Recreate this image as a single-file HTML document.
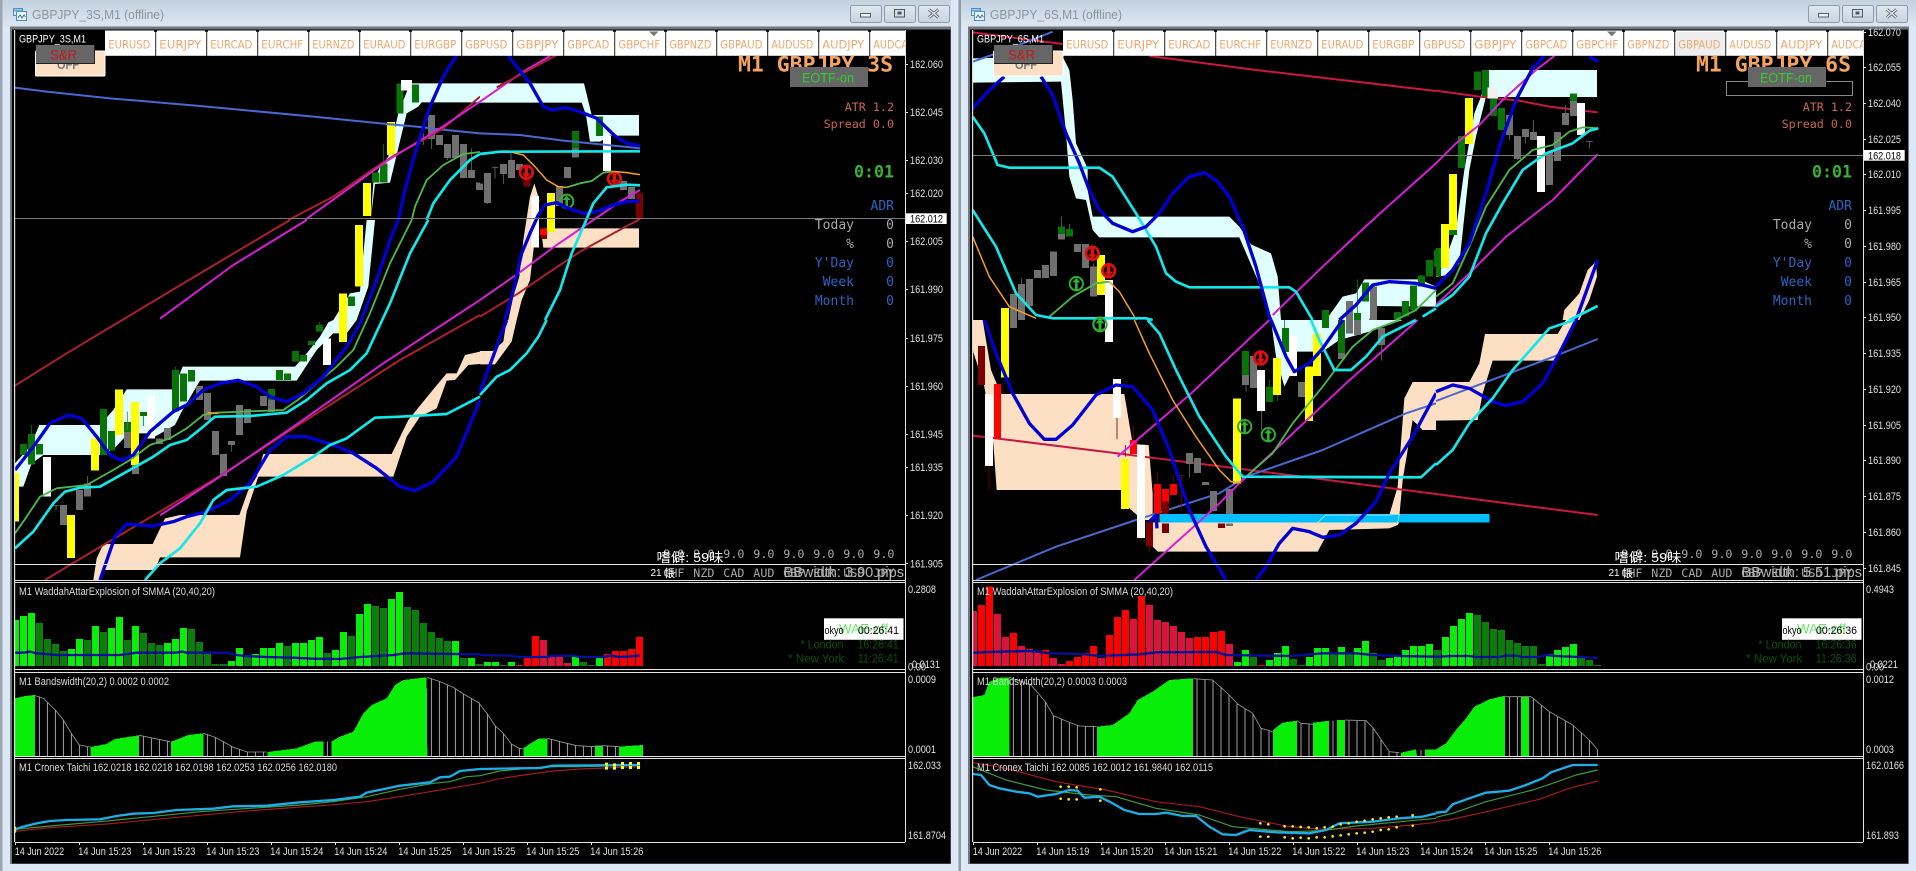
<!DOCTYPE html>
<html><head><meta charset="utf-8"><title>GBPJPY charts</title>
<style>
html,body{margin:0;padding:0;background:#dce8f5;width:1916px;height:871px;overflow:hidden}
svg{display:block}
.n{fill:none;stroke-linejoin:round;stroke-linecap:round}
.b{fill:none;stroke:#0000d2;stroke-width:10;stroke-linejoin:round}
.c{fill:none;stroke:#12e8ea;stroke-width:8;stroke-linejoin:round}
.g{fill:none;stroke:#4cb84c;stroke-width:5.5;stroke-linejoin:round}
.o{fill:none;stroke:#f0a020;stroke-width:4.5;stroke-linejoin:round}
.m{fill:none;stroke:#d41fd4;stroke-width:6;stroke-linejoin:round}
.r{fill:none;stroke:#aa2030;stroke-width:6;stroke-linejoin:round}
.q{fill:none;stroke:#c81840;stroke-width:6;stroke-linejoin:round}
.k{fill:none;stroke:#4a68d0;stroke-width:6;stroke-linejoin:round}
.nv{fill:none;stroke:#00109a;stroke-width:7;stroke-linejoin:round}
.cb{fill:none;stroke:#1eaee6;stroke-width:7;stroke-linejoin:round}
.gt{fill:none;stroke:#3f9a3f;stroke-width:3.5;stroke-linejoin:round}
.rt{fill:none;stroke:#a01c1c;stroke-width:3.5;stroke-linejoin:round}
.cv{fill:none;stroke:#9a9a9a;stroke-width:2.5;stroke-linejoin:round}
.vl{fill:none;stroke:#c4c4c4;stroke-width:2.5}
.wk{fill:none;stroke:#6a6a6a;stroke-width:2.5}
.wg{fill:none;stroke:#0a7a0a;stroke-width:2.5}
.wr{fill:none;stroke:#7a0000;stroke-width:2.5}
.cyan{fill:#e0ffff}.pe{fill:#fddfc3}
.ye{fill:#ff0}.wh{fill:#fff}.gr{fill:#707070}.dg{fill:#087408}.rd{fill:#f00}.dr{fill:#7b0000}
text{font-family:"Liberation Sans",sans-serif;font-size:11px;fill:#ddd}
.ax{fill:#e0e0e0}
.tb{font-family:"DejaVu Sans",sans-serif;font-size:11.5px;fill:#f0a870}
.mono{font-family:"DejaVu Sans Mono","Liberation Mono",monospace}
.tt{font-size:12.5px;fill:#8b949c}
</style></head>
<body>
<svg xmlns="http://www.w3.org/2000/svg" width="1916" height="871" viewBox="0 0 1916 871">
<defs>
<g id="dn"><circle r="23" fill="#e01010"/><circle r="15" fill="#000"/><path d="M-5 -23H5V3H13L0 17L-13 3H-5Z" fill="#e01010"/></g>
<g id="up"><circle r="20" fill="none" stroke="#2fae2f" stroke-width="6"/><path d="M-4 20H4V-4H12L0 -17L-12 -4H-4Z" fill="#2fae2f"/></g>
<linearGradient id="tbg" x1="0" y1="0" x2="0" y2="1"><stop offset="0" stop-color="#c3d1df"/><stop offset="1" stop-color="#dde7f1"/></linearGradient>
<linearGradient id="btn" x1="0" y1="0" x2="0" y2="1"><stop offset="0" stop-color="#dfe8f1"/><stop offset="1" stop-color="#c6d3e0"/></linearGradient>
</defs>

<!-- page frame -->
<rect width="1916" height="871" fill="#dce8f5"/>
<rect x="0" y="0" width="1916" height="27" fill="url(#tbg)"/>
<rect x="0" y="0" width="2.5" height="871" fill="#9ba6b1"/>
<rect x="951" y="0" width="9" height="871" fill="#dce8f5"/>
<rect x="958.5" y="0" width="2.5" height="871" fill="#8e99a4"/>
<rect x="10" y="26.5" width="941" height="837.5" fill="#6f7780"/>
<rect x="968" y="26.5" width="941" height="837.5" fill="#6f7780"/>
<rect x="12" y="29.5" width="938.5" height="834" fill="#000"/>
<rect x="970" y="29.5" width="938" height="834" fill="#000"/>

<!-- WINDOW 1 main -->
<g transform="translate(0,0) scale(.33333)">
<polygon class="cyan" points="1112,660 1125,552 1170,548 1220,340 1255,320 1265,307 1440,307 1440,250 1230,250 1195,340 1165,470 1140,500 1120,550"/>
<g shape-rendering="crispEdges">
<path class="dg" d="M1189 250h22v90h-22zM1236 253h21v54h-21zM1140 490h22v58h-22zM1116 518h22v30h-22z"/>
<path class="wh" d="M1203 240h33v32h-33z"/>
<path class="ye" d="M1161 366h24v99h-24zM1089 549h24v99h-24z"/>
<path class="gr" d="M1284 345h21v72h-21zM1308 405h21v30h-21zM1332 432h21v42h-21zM1356 405h21v69h-21zM1380 432h21v102h-21zM1404 510h21v24h-21zM1428 548h12v22h-12z"/>
</g>
<path class="wg" d="M1150 432V490"/><path class="wk" d="M1294 417V447M1270 400V435M1342 474V480M1414 445V510"/>
<polyline class="k" points="45,263 140,275 330,295 600,318 760,333 940,350 1160,372 1250,380 1320,388 1440,400"/>
<polyline class="r" points="865,660 1000,590 1145,490 1190,462 1260,425 1330,385 1440,290"/>
<polyline class="m" points="915,660 1165,480 1320,385 1440,305"/>
<polyline class="b" points="1195,660 1215,570 1245,460 1290,320 1330,230 1380,150"/>
<polyline class="g" points="1235,660 1245,620 1280,540 1330,495 1390,462 1440,456"/>
<polyline class="c" points="1280,660 1300,610 1350,540 1410,480 1440,462"/>
</g>
<g transform="translate(480,0) scale(.33333)">
<polygon class="cyan" points="0,250 312,250 335,345 477,345 477,407 390,407 360,425 330,425 318,345 305,308 0,308"/>
<polygon class="pe" points="163,550 150,590 130,720 118,830 100,890 85,960 110,960 125,900 150,840 178,600"/>
<polygon class="pe" points="190,685 477,685 477,743 190,743 185,705"/>
<g shape-rendering="crispEdges">
<path class="wh" d="M155 588h22v155h-22zM369 408h24v105h-24z"/>
<path class="ye" d="M201 579h24v117h-24z"/>
<path class="dg" d="M348 349h21v59h-21zM276 393h21v52h-21z"/>
<path class="gr" d="M276 445h21v28h-21zM0 550h9v20h-9zM12 519h21v90h-21zM60 492h21v30h-21zM84 480h21v54h-21zM108 492h21v18h-21zM252 501h21v33h-21zM228 558h21v60h-21zM420 543h21v27h-21zM444 561h21v36h-21z"/>
<path class="dr" d="M468 579h21v78h-21zM183 705h18v12h-18zM130 530h22v30h-22z"/>
<path class="rd" d="M180 685h21v20h-21z"/>
</g>
<path class="wk" d="M45 500V535M36 502H55M70 522V552M93 458V480M22 609V612"/>
<use href="#dn" x="139" y="517"/><use href="#dn" x="403" y="536"/><use href="#up" x="260" y="604"/>
<polyline class="m" points="0,305 130,215 210,168"/><polyline class="r" points="50,262 230,165"/>
<polyline class="k" points="0,400 120,405 250,422 480,445"/>
<polyline class="b" points="85,168 150,250 190,320 215,330 260,323 300,335 350,355 405,408 440,430 480,437"/>
<polyline class="c" points="0,462 60,455 480,454"/>
<polyline class="o" points="100,458 130,465 165,500 200,540 235,560 260,562"/>
<polyline class="g" points="260,562 300,550 335,543 370,518 400,514"/>
<polyline class="o" points="400,514 440,518 480,524"/>
<polyline class="m" points="0,900 115,820 230,735 340,660 420,605 480,570"/>
<polyline class="r" points="0,950 115,880 210,815 300,755 400,700 480,657"/>
<polyline class="b" points="75,960 100,870 125,760 150,700 175,645 195,615 230,608 265,625 310,640 350,635 400,615 440,605 480,603"/>
<polyline class="c" points="195,960 240,870 275,760 310,680 340,610 380,562 440,554 480,556"/>
</g>
<g transform="translate(0,220) scale(.33333)">
<polygon class="cyan" points="45,800 70,800 95,730 130,705 310,705 345,683 385,640 440,640 465,650 525,615 545,575 600,482 890,482 950,390 1000,340 1040,340 1070,300 1105,200 1125,0 1100,0 1090,100 1080,215 1050,220 1000,300 985,307 960,350 920,400 885,440 548,440 520,508 380,508 340,570 300,615 118,615 90,680 45,730"/>
<polygon class="pe" points="280,1080 290,1015 310,972 458,972 495,895 540,885 718,885 745,810 770,770 790,702 1175,702 1225,600 1290,520 1340,460 1370,460 1395,405 1440,395 1440,432 1405,435 1365,480 1340,482 1310,565 1260,590 1220,650 1180,770 775,770 740,875 720,1012 480,1012 465,1050 310,1050 300,1080"/>
<g shape-rendering="crispEdges">
<path class="gr" d="M180 855h21v60h-21zM228 810h21v60h-21zM252 790h21v40h-21zM372 630h21v54h-21zM396 735h21v27h-21zM468 655h21v17h-21zM492 624h21v36h-21zM588 498h21v42h-21zM612 519h21v81h-21zM636 633h21v72h-21zM660 702h21v66h-21zM708 555h21v90h-21zM732 567h21v42h-21zM780 528h21v30h-21zM804 537h21v39h-21zM684 663h21v12h-21z"/>
<path class="dg" d="M60 672h21v33h-21zM84 642h21v91h-21zM108 672h21v31h-21zM300 567h21v138h-21zM324 633h21v59h-21zM372 606h21v30h-21zM516 450h21v125h-21zM540 460h21v85h-21zM564 450h21v35h-21zM828 450h21v30h-21zM852 460h21v20h-21zM876 393h21v31h-21zM900 405h21v19h-21zM924 363h21v12h-21zM948 315h21v19h-21zM804 507h21v33h-21zM1044 230h21v28h-21zM420 576h21v12h-21z"/>
<path class="wh" d="M129 711h24v119h-24zM441 528h24v127h-24zM969 355h24v80h-24z"/>
<path class="ye" d="M45 759h12v146h-12zM201 885h24v129h-24zM273 655h24v97h-24zM345 508h24v137h-24zM393 546h24v189h-24zM1017 220h24v146h-24zM1065 15h24v185h-24z"/>
</g>
<path class="wk" d="M168 856V870M158 857H178M262 768V790M382 575V630M694 675V695"/>
<path class="wg" d="M94 615V642M430 588V618M527 440V450M959 306V315"/>
<polyline class="r" points="45,497 200,400 600,160 870,0"/>
<polyline class="m" points="480,296 700,135 920,0"/>
<polyline class="r" points="135,1080 310,975 660,768 880,625 1200,420 1440,285"/>
<polyline class="m" points="480,886 660,770 880,620 1150,430 1440,240"/>
<polyline class="g" points="45,940 80,890 120,830 170,805 260,795 340,750 390,720 450,675 510,655 560,625 610,585 650,578 850,570 900,535 950,490 1010,440 1060,390 1110,280 1170,130 1235,0"/>
<polyline class="o" points="622,578 655,580"/>
<polyline class="b" points="45,750 100,680 150,610 205,585 245,595 290,650 330,705 365,722 400,705 450,635 520,575 560,555 610,510 660,490 715,481 770,500 810,530 860,545 910,520 970,470 1040,380 1080,310 1130,180 1170,60 1195,0"/>
<polyline class="c" points="45,985 100,935 160,850 195,815 240,803 300,800 380,755 460,710 510,675 560,660 610,620 645,590 750,588 860,578 920,540 980,490 1050,450 1100,400 1170,250 1230,100 1285,0"/>
<polyline class="b" points="300,1080 345,950 380,912 460,918 520,905 560,890 620,875 690,840 750,790 810,690 860,650 920,650 1000,675 1060,700 1130,745 1200,800 1245,812 1300,785 1370,710 1440,540"/>
<polyline class="c" points="435,1080 480,1030 540,985 600,910 640,840 680,810 770,800 850,765 940,710 990,675 1040,655 1125,593 1200,590 1340,582 1440,530"/>
</g>
<g transform="translate(480,320) scale(.33333)">
<polygon class="pe" points="80,0 110,0 95,65 45,133 0,133 0,93 38,93 70,65"/>
<polyline class="b" points="80,0 0,215"/>
<polyline class="c" points="200,0 175,50 140,100 90,150 50,170 0,225"/>
</g>

<!-- WINDOW 1 WAE / bands / cronex -->
<g transform="translate(0,570) scale(.33333)">
<g shape-rendering="crispEdges">
<path d="M45 150h12V288h-12z" fill="#08ee08"/>
<path transform="translate(10.5)" stroke="#08ee08" stroke-width="21" fill="none" d="M60 288V138M84 288V129M204 288V237M228 288V207M276 288V168M324 288V174M348 288V141M396 288V168M492 288V219M516 288V207M540 288V174M684 288V273M708 288V234M756 288V252M780 288V234M804 288V234M828 288V219M876 288V219M900 288V219M924 288V210M948 288V201M996 288V240M1020 288V186M1068 288V132M1092 288V102M1164 288V87M1188 288V66M1356 288V213M1404 288V264"/>
<path transform="translate(10.5)" stroke="#0a7d0a" stroke-width="21" fill="none" d="M108 288V159M132 288V207M156 288V222M180 288V243M252 288V210M300 288V186M372 288V210M420 288V189M444 288V219M468 288V225M564 288V177M588 288V216M612 288V252M636 288V282M660 288V282M732 288V255M852 288V228M972 288V249M1044 288V198M1116 288V108M1140 288V114M1212 288V111M1236 288V120M1260 288V159M1284 288V186M1308 288V204M1332 288V213M1380 288V264M1428 288V282"/>
</g>
<polyline class="nv" points="45,248 70,248 90,245 110,250 170,255 360,255 410,248 530,248 545,245 560,248 680,248 710,255 735,258 800,261 880,263 940,266 1020,267 1080,261 1180,255 1215,250 1440,253"/>
<g fill="#08ee08" shape-rendering="crispEdges">
<polygon points="45,385 75,378 105,375 105,558 45,558"/>
<polygon points="272,531 320,522 345,507 417,496 417,558 272,558"/>
<polygon points="513,515 540,505 565,495 610,490 610,558 513,558"/>
<polygon points="802,546 890,535 945,515 970,515 970,558 802,558"/>
<polygon points="994,515 1020,500 1060,485 1090,430 1115,405 1160,385 1185,345 1210,330 1280,322 1282,558 994,558"/>
</g>
<path class="vl" d="M118 558V380M142 558V398M166 558V420M190 558V450M214 558V490M238 558V525M262 558V531M430 558V498M454 558V505M478 558V510M502 558V514M622 558V492M646 558V503M670 558V515M694 558V528M718 558V538M742 558V546M766 558V546M790 558V546M982 558V515M1294 558V325M1318 558V333M1342 558V343M1366 558V356M1390 558V372M1414 558V386M1438 558V400"/>
<polyline class="cv" points="105,377 130,385 166,420 190,450 214,490 238,525 272,531"/>
<polyline class="cv" points="417,496 510,515"/>
<polyline class="cv" points="610,490 640,500 670,515 700,532 742,546 800,546"/>
<polyline class="cv" points="1282,322 1320,335 1360,352 1390,372 1440,400"/>
<polyline class="rt" points="45,784 150,773 320,762 500,745 750,722 1000,704 1100,695 1200,680 1320,660 1440,640"/>
<polyline class="gt" points="45,778 150,768 300,755 450,740 600,725 750,715 900,705 1000,695 1100,680 1200,658 1300,640 1350,635 1400,620 1440,617"/>
<polyline class="cb" points="45,778 70,770 110,760 150,753 200,750 300,748 350,738 400,731 460,729 530,720 640,716 700,709 800,707 900,697 1000,690 1080,680 1100,668 1200,647 1290,637 1320,622 1350,620 1380,603 1440,597"/>
<path stroke="#e8e020" stroke-width="5" d="M46 770V788"/>
</g>
<g transform="translate(480,570) scale(.33333)">
<g shape-rendering="crispEdges">
<path transform="translate(10.5)" stroke="#08ee08" stroke-width="21" fill="none" d="M12 288V276M36 288V276M84 288V276M276 288V258M348 288V258"/>
<path transform="translate(10.5)" stroke="#0a7d0a" stroke-width="21" fill="none" d="M60 288V285M300 288V276M324 288V285"/>
<path transform="translate(10.5)" stroke="#f00" stroke-width="21" fill="none" d="M132 288V264M156 288V198M372 288V252M396 288V243M420 288V243M444 288V237M468 288V201"/>
<path transform="translate(10.5)" stroke="#dc143c" stroke-width="21" fill="none" d="M108 288V285M180 288V210M204 288V258M228 288V258M252 288V279"/>
</g>
<polyline class="nv" points="0,255 90,257 120,261 200,261 220,257 280,257 300,261 370,261 390,257 420,261 480,257"/>
<g fill="#08ee08" shape-rendering="crispEdges">
<polygon points="130,535 155,518 178,505 202,505 202,558 130,558"/>
<rect x="345" y="527" width="24" height="31"/>
<polygon points="417,530 489,525 489,558 417,558"/>
</g>
<path class="vl" d="M22 558V432M46 558V468M70 558V490M94 558V522M118 558V535M214 558V507M238 558V513M262 558V520M286 558V526M310 558V529M334 558V530M382 558V527M406 558V529"/>
<polyline class="cv" points="0,403 22,432 46,468 70,490 94,522 118,535 130,537"/>
<polyline class="cv" points="202,505 240,515 290,527 345,530 369,527 417,530"/>
<polyline class="rt" points="0,640 50,628 130,615 220,603 300,597 370,594 480,590"/>
<polyline class="gt" points="0,617 60,603 120,597 200,590 290,590 380,588 480,585"/>
<polyline class="cb" points="0,597 120,595 180,594 220,587 480,585"/>
<path fill="#ffff20" d="M375 578h9v9h-9zM375 590h9v9h-9zM399 580h9v9h-9zM399 590h9v9h-9zM423 576h9v9h-9zM423 588h9v9h-9zM447 576h9v9h-9zM447 588h9v9h-9zM471 576h9v9h-9zM471 588h9v9h-9z"/>
</g>

<!-- WINDOW 2 main -->
<g transform="translate(956,0) scale(.33333)">
<polygon class="cyan" points="50,175 320,170 340,210 350,300 360,430 395,505 395,570 410,650 820,650 850,680 885,733 945,760 965,830 975,960 940,960 905,840 850,712 430,712 410,690 390,600 360,595 340,530 330,400 315,245 50,248"/>
<polygon class="cyan" points="1110,960 1160,890 1200,880 1225,838 1390,838 1440,860 1440,920 1250,918 1240,960"/>
<polyline class="q" points="50,97 320,132"/><polyline class="q" points="580,168 900,210 1440,273"/>
<polyline class="k" points="50,185 150,150 290,95"/>
<g shape-rendering="crispEdges">
<path class="gr" d="M306 702h21v16h-21zM354 732h21v24h-21zM378 732h21v72h-21zM282 754h21v74h-21zM258 795h21v39h-21zM234 810h21v24h-21zM210 837h21v81h-21zM186 852h21v108h-21zM162 882h21v78h-21zM402 800h21v90h-21zM1170 903h21v57h-21zM1242 860h21v100h-21z"/>
<path class="dg" d="M306 680h21v22h-21zM330 687h21v23h-21zM1098 930h21v30h-21zM1194 939h21v21h-21zM1218 848h21v57h-21zM1338 903h21v47h-21zM1362 857h21v73h-21zM1386 826h21v34h-21zM1410 780h21v50h-21zM1434 750h6v50h-6zM1314 936h21v24h-21z"/>
<path class="ye" d="M423 765h24v120h-24zM135 924h24v36h-24z"/>
<path class="wh" d="M447 840h24v120h-24z"/>
</g>
<path class="wk" d="M316 650V680M340 672V687M196 835V852M220 835V837M412 790V800"/><path class="wg" d="M1204 838V939"/>
<use href="#dn" x="409" y="760"/><use href="#dn" x="458" y="812"/><use href="#up" x="361" y="851"/><use href="#up" x="432" y="972"/>
<polyline class="m" points="950,945 1100,800 1250,660 1440,490"/>
<polyline class="o" points="50,710 100,830 160,920 240,955"/>
<polyline class="o" points="460,845 490,875 535,950 542,960"/>
<polyline class="g" points="280,950 350,890 420,850 460,845"/>
<polyline class="g" points="1320,960 1380,930 1440,870"/>
<polyline class="c" points="50,350 85,400 125,495 160,503 430,503 470,530 540,640 600,740 630,820 660,845 700,862 1000,862 1020,875 1070,960"/>
<polyline class="c" points="50,630 120,740 180,880 240,945 290,955 570,955 590,960"/>
<polyline class="c" points="1400,950 1440,925"/>
<polyline class="b" points="50,325 100,270 145,230"/>
<polyline class="b" points="255,230 290,285 330,400 370,490 400,570 430,630 470,670 530,695 570,680 610,640 650,580 700,530 745,518 785,545 820,590 860,680 900,800 940,950 945,960"/>
<polyline class="b" points="1150,960 1200,915 1250,855 1300,845 1380,850 1440,865"/>
</g>
<g transform="translate(1436,0) scale(.33333)">
<polygon class="cyan" points="155,210 483,210 483,291 155,291"/>
<polygon class="cyan" points="0,830 40,825 70,790 100,510 120,410 150,290 150,240 135,290 115,340 85,510 60,690 20,800 0,828"/>
<polygon class="pe" points="380,960 385,930 430,880 455,810 480,785 483,830 460,900 430,960"/>
<polyline class="q" points="0,272 130,290 250,302 340,320 485,337"/>
<g shape-rendering="crispEdges">
<path class="ye" d="M87 294h24v138h-24zM39 522h24v168h-24zM15 672h24v132h-24z"/>
<path class="dg" d="M114 215h21v55h-21zM138 210h21v80h-21zM162 295h21v53h-21zM186 324h21v66h-21zM66 408h21v96h-21zM0 744h15v84h-15zM39 690h24v15h-24zM402 280h21v23h-21z"/>
<path class="wh" d="M423 309h24v96h-24zM303 408h24v168h-24z"/>
<path fill="#f2f0f0" d="M155 262h31v33h-31z"/>
<path class="gr" d="M210 345h21v60h-21zM234 408h21v69h-21zM258 387h21v24h-21zM282 396h21v24h-21zM330 456h21v99h-21zM354 396h21v87h-21zM378 339h21v36h-21zM402 303h21v45h-21z"/>
</g>
<path class="wk" d="M292 360V396M268 411V430M244 477V480M220 405V420M388 315V339M460 424V445M450 424H470"/>
<polyline class="m" points="0,490 60,430 130,375 200,300 300,210 355,168"/>
<polyline class="m" points="0,915 100,820 210,710 350,600 485,463"/>
<polyline class="g" points="0,890 50,850 100,740 150,620 220,510 290,450 350,435 400,395 440,382 485,385"/>
<polyline class="b" points="0,860 50,810 100,730 150,580 190,440 240,300 290,205 325,168"/>
<polyline class="b" points="460,170 487,185"/>
<polyline class="c" points="0,920 50,885 100,830 150,700 200,610 260,510 330,460 410,430 460,392 487,385"/>
<polyline class="b" points="420,960 485,780"/>
<polyline class="c" points="400,960 485,918"/>
</g>
<g transform="translate(956,320) scale(.33333)">
<polygon class="pe" points="50,0 80,0 105,150 135,222 505,222 530,372 578,375 590,520 590,600 560,600 520,565 495,510 122,510 112,370 85,200 50,90"/>
<polygon class="pe" points="585,607 1330,607 1325,615 1300,625 1120,630 1085,695 605,695 590,680 575,610"/>
<polygon class="pe" points="1300,585 1325,500 1345,235 1370,186 1440,186 1440,330 1400,330 1370,300 1340,480 1330,590"/>
<polygon class="cyan" points="945,0 1340,0 1240,35 1150,60 1100,95 1020,95 1000,170 985,200 960,110"/>
<rect x="610" y="582" width="830" height="25" fill="#00bfff" shape-rendering="crispEdges"/>
<path d="M1085 607L1110 585H1300L1330 583L1325 607" fill="none" stroke="#d6f4ff" stroke-width="2"/>
<polyline class="q" points="50,347 120,355 500,402 800,440 1000,465 1440,522"/>
<polyline class="k" points="60,780 300,680 540,600 790,520 870,470 1100,390 1350,280 1440,250"/>
<g shape-rendering="crispEdges">
<path class="gr" d="M162 0h21v24h-21zM690 399h21v33h-21zM714 414h21v45h-21zM762 513h21v60h-21zM810 507h21v75h-21zM738 486h21v9h-21zM810 610h21v8h-21zM882 108h21v96h-21zM1026 186h21v45h-21zM858 165h21v30h-21zM1170 0h21v40h-21zM1194 0h21v45h-21zM1266 24h21v51h-21zM1146 99h21v18h-21z"/>
<path class="dg" d="M858 93h21v72h-21zM930 201h21v45h-21zM1146 0h21v99h-21zM978 24h21v72h-21zM1098 0h21v24h-21z"/>
<path class="rd" d="M114 192h21v162h-21zM522 360h21v42h-21zM594 492h21v88h-21zM618 507h21v38h-21zM642 492h21v33h-21z"/>
<path class="dr" d="M66 78h21v117h-21zM618 545h21v37h-21zM618 610h21v29h-21zM786 610h21v14h-21zM570 606h21v74h-21z"/>
<path class="ye" d="M135 0h24v172h-24zM831 235h24v255h-24zM495 415h24v152h-24zM951 114h24v111h-24zM1047 140h24v163h-24zM1071 40h24v128h-24z"/>
<path class="wh" d="M447 0h24v66h-24zM87 222h24v216h-24zM471 177h24v117h-24zM543 375h24v279h-24zM903 150h24v123h-24zM999 48h24v120h-24z"/>
</g>
<path class="wk" d="M700 432V472M870 195V215M917 273V330M1277 75V122"/>
<path class="wr" d="M99 438V508M483 294V358M532 316V360M604 456V492M652 465V492M676 465V565M666 466H686M580 680V695M508 375V410"/>
<path class="wg" d="M940 178V201M964 225V245M986 0V24"/>
<use href="#dn" x="914" y="114"/><use href="#up" x="866" y="320"/><use href="#up" x="937" y="344"/><use href="#up" x="432" y="14"/>
<polyline class="m" points="485,410 700,225 940,0"/>
<polyline class="m" points="535,780 780,560 850,490 1000,350 1170,190 1385,0"/>
<polyline class="o" points="535,0 580,100 650,240 720,350 790,450 825,485 855,488"/>
<polyline class="g" points="870,470 950,400 1010,310 1100,200 1190,80 1250,30 1330,0"/>
<polyline class="c" points="575,0 610,40 660,150 730,290 810,410 860,470 1395,472 1440,430"/>
<polyline class="c" points="1065,0 1090,60 1135,150 1185,150 1230,110 1280,50 1380,0"/>
<polyline class="b" points="85,0 120,100 170,220 220,310 265,358 300,358 350,315 420,225 480,195 530,200 590,270 640,390 700,570 750,680 810,780"/>
<polyline class="b" points="900,780 930,740 970,670 1010,625 1060,635 1100,652 1150,645 1200,610 1260,545 1300,460 1370,350 1440,220"/>
<polyline class="b" points="945,0 990,110 1015,155 1060,130 1100,85 1160,0"/>
<polyline class="b" points="580,605 600,585 603,625"/>
</g>
<g transform="translate(1436,320) scale(.33333)">
<polygon class="pe" points="0,186 100,186 130,130 147,42 365,42 390,0 420,0 360,122 170,122 140,220 125,300 0,302"/>
<rect x="0" y="582" width="161" height="25" fill="#00bfff" shape-rendering="crispEdges"/>
<polyline class="q" points="0,522 250,555 485,585"/>
<polyline class="k" points="0,243 140,190 340,115 485,57"/>
<polyline class="b" points="0,215 50,195 100,205 170,245 210,257 260,245 320,190 370,100 420,0"/>
<polyline class="c" points="0,435 50,390 100,310 170,235 230,150 340,25 415,0"/>
</g>

<!-- WINDOW 2 WAE / bands / cronex -->
<g transform="translate(956,570) scale(.33333)">
<g shape-rendering="crispEdges">
<path d="M50 123h13V288h-13z" fill="#dc143c"/>
<path transform="translate(10.5)" stroke="#f00" stroke-width="21" fill="none" d="M66 288V105M90 288V50M162 288V189M258 288V240M330 288V273M354 288V261M378 288V249M402 288V228M450 288V195M474 288V141M498 288V120M546 288V78M714 288V201M738 288V201M762 288V186M786 288V183M906 288V285"/>
<path transform="translate(10.5)" stroke="#dc143c" stroke-width="21" fill="none" d="M114 288V132M138 288V201M186 288V228M210 288V237M234 288V246M282 288V264M306 288V282M426 288V264M522 288V147M570 288V105M594 288V150M618 288V156M642 288V168M666 288V186M690 288V204M810 288V222"/>
<path transform="translate(10.5)" stroke="#08ee08" stroke-width="21" fill="none" d="M834 288V276M858 288V240M930 288V270M954 288V249M978 288V228M1050 288V261M1074 288V234M1098 288V234M1146 288V231M1194 288V234M1218 288V213M1290 288V264M1314 288V258M1338 288V240M1362 288V228M1386 288V228M1410 288V222"/>
<path transform="translate(10.5)" stroke="#0a7d0a" stroke-width="21" fill="none" d="M882 288V261M1002 288V267M1026 288V285M1122 288V252M1170 288V249M1242 288V249M1266 288V270M1434 288V240"/>
</g>
<polyline class="nv" points="50,248 130,245 230,243 280,250 380,252 430,258 550,253 600,247 780,246 810,255 1000,258 1100,250 1200,250 1250,255 1330,258 1440,260"/>
<g fill="#08ee08" shape-rendering="crispEdges">
<polygon points="50,382 85,375 100,335 135,322 160,322 160,558 50,558"/>
<polygon points="423,470 470,465 520,430 545,390 590,365 640,330 711,325 711,558 423,558"/>
<polygon points="951,480 980,458 1023,452 1023,558 951,558"/>
<polygon points="1071,458 1119,452 1119,558 1071,558"/>
<rect x="1143" y="450" width="24" height="108"/>
<polygon points="1335,548 1380,538 1383,558 1335,558"/>
<rect x="1407" y="538" width="33" height="20"/>
</g>
<path class="vl" d="M172 558V325M196 558V332M220 558V342M244 558V375M268 558V395M292 558V437M316 558V447M340 558V457M364 558V466M388 558V469M412 558V470M723 558V327M747 558V328M771 558V332M795 558V350M819 558V375M843 558V401M867 558V416M891 558V431M915 558V475M939 558V483M1035 558V460M1059 558V463M1131 558V452M1179 558V451M1203 558V452M1227 558V452M1251 558V472M1275 558V510M1299 558V545M1323 558V548M1395 558V540"/>
<polyline class="cv" points="160,322 225,345 268,395 292,437 340,457 370,468 422,470"/>
<polyline class="cv" points="711,326 770,330 820,375 845,402 890,430 915,475 950,485"/>
<polyline class="cv" points="1023,452 1035,460 1071,463"/>
<polyline class="cv" points="1167,450 1230,452 1250,472 1300,545 1330,548"/>
<polyline class="rt" points="50,578 150,595 300,635 450,660 600,695 730,710 850,740 1000,770 1100,778 1250,775 1370,765 1440,757"/>
<polyline class="gt" points="50,590 150,630 270,660 400,675 480,680 600,715 730,735 830,770 1000,785 1100,782 1200,768 1440,745"/>
<polyline class="cb" points="50,612 75,615 100,645 130,655 180,665 220,670 245,680 300,672 340,660 365,662 385,683 430,680 470,700 505,720 550,732 600,732 630,728 680,738 720,738 760,770 800,793 840,795 880,780 960,787 1060,790 1110,780 1150,760 1250,755 1330,745 1400,740 1440,730"/>
<g fill="#ffe820">
<circle cx="314" cy="650" r="4"/><circle cx="314" cy="686" r="4"/><circle cx="338" cy="650" r="4"/><circle cx="338" cy="688" r="4"/><circle cx="362" cy="652" r="4"/><circle cx="362" cy="688" r="4"/><circle cx="433" cy="658" r="4"/><circle cx="433" cy="692" r="4"/><circle cx="913" cy="760" r="4"/><circle cx="913" cy="800" r="4"/><circle cx="937" cy="763" r="4"/><circle cx="937" cy="800" r="4"/><circle cx="986" cy="769" r="4"/><circle cx="986" cy="802" r="4"/><circle cx="1010" cy="769" r="4"/><circle cx="1010" cy="805" r="4"/><circle cx="1034" cy="771" r="4"/><circle cx="1034" cy="803" r="4"/><circle cx="1058" cy="772" r="4"/><circle cx="1058" cy="805" r="4"/><circle cx="1082" cy="775" r="4"/><circle cx="1082" cy="802" r="4"/><circle cx="1106" cy="772" r="4"/><circle cx="1106" cy="802" r="4"/><circle cx="1130" cy="770" r="4"/><circle cx="1130" cy="799" r="4"/><circle cx="1154" cy="763" r="4"/><circle cx="1154" cy="796" r="4"/><circle cx="1178" cy="760" r="4"/><circle cx="1178" cy="793" r="4"/><circle cx="1202" cy="755" r="4"/><circle cx="1202" cy="790" r="4"/><circle cx="1226" cy="752" r="4"/><circle cx="1226" cy="788" r="4"/><circle cx="1250" cy="748" r="4"/><circle cx="1250" cy="785" r="4"/><circle cx="1274" cy="745" r="4"/><circle cx="1274" cy="780" r="4"/><circle cx="1298" cy="742" r="4"/><circle cx="1298" cy="778" r="4"/><circle cx="1322" cy="740" r="4"/><circle cx="1322" cy="772" r="4"/><circle cx="1370" cy="736" r="4"/><circle cx="1370" cy="767" r="4"/>
</g>
</g>
<g transform="translate(1436,570) scale(.33333)">
<g shape-rendering="crispEdges">
<path transform="translate(10.5)" stroke="#08ee08" stroke-width="21" fill="none" d="M18 288V201M42 288V168M66 288V147M90 288V129M330 288V252M354 288V240M378 288V231M402 288V222"/>
<path transform="translate(10.5)" stroke="#0a7d0a" stroke-width="21" fill="none" d="M114 288V135M138 288V156M162 288V177M186 288V180M210 288V210M234 288V219M258 288V228M282 288V228M306 288V282M426 288V264M450 288V270M474 288V285"/>
</g>
<polyline class="nv" points="0,260 50,258 100,258 120,261 190,261 210,257 240,257 260,261 310,261 330,255 360,258 430,261 485,264"/>
<g fill="#08ee08" shape-rendering="crispEdges">
<polygon points="0,538 30,520 60,480 90,445 115,410 160,388 207,377 207,558 0,558"/>
<rect x="255" y="380" width="24" height="178"/>
</g>
<path class="vl" d="M220 558V380M244 558V380M292 558V385M316 558V405M340 558V425M364 558V441M388 558V455M412 558V466M436 558V488M460 558V510M484 558V540"/>
<polyline class="cv" points="208,380 285,380 340,425 410,465 460,510 485,540"/>
<polyline class="rt" points="0,755 40,750 150,725 310,688 400,655 485,633"/>
<polyline class="gt" points="0,742 50,730 150,695 290,660 350,640 420,615 485,600"/>
<polyline class="cb" points="0,728 30,725 50,703 100,685 150,668 220,662 270,645 320,625 345,607 410,585 485,585"/>
</g>

<!-- WINDOW 1 overlay -->
<g id="w1">
<rect x="14" y="30" width="1.2" height="812" fill="#ddd"/>
<path d="M15 218.5H905" stroke="#7a7a7a" fill="none"/>
<path d="M15 564.5H905M15 580.5H905M15 582.5H905M15 669.5H905M15 672.5H905M15 756.5H905M15 758.5H905M15 842.5H905M905.5 30V842" stroke="#e4e4e4" fill="none"/>
<text x="738" y="71.5" class="mono" style="font-size:21.4px;font-weight:bold;fill:#f4a460" textLength="155" lengthAdjust="spacingAndGlyphs">M1 GBPJPY 3S</text>
<rect x="105" y="30.5" width="800" height="25.3" fill="#fff"/>
<path d="M155.7 31V56M206.7 31V56M257.7 31V56M308.7 31V56M359.7 31V56M410.7 31V56M461.7 31V56M512.7 31V56M563.7 31V56M614.7 31V56M665.7 31V56M716.7 31V56M767.7 31V56M818.7 31V56M869.7 31V56" stroke="#222" fill="none"/>
<path d="M154 31h3M205 31h3M256 31h3M307 31h3M358 31h3M409 31h3M460 31h3M511 31h3M562 31h3M613 31h3M664 31h3M715 31h3M766 31h3M817 31h3M868 31h3" stroke="#000" stroke-width="1.5" fill="none"/>
<path d="M649 31.5h9.5l-4.7 4.7z" fill="#777"/>
<text class="tb" x="108.3" y="48.5" textLength="42" lengthAdjust="spacingAndGlyphs">EURUSD</text><text class="tb" x="159.3" y="48.5" textLength="42" lengthAdjust="spacingAndGlyphs">EURJPY</text><text class="tb" x="210.3" y="48.5" textLength="42" lengthAdjust="spacingAndGlyphs">EURCAD</text><text class="tb" x="261.3" y="48.5" textLength="42" lengthAdjust="spacingAndGlyphs">EURCHF</text><text class="tb" x="312.3" y="48.5" textLength="42" lengthAdjust="spacingAndGlyphs">EURNZD</text><text class="tb" x="363.3" y="48.5" textLength="42" lengthAdjust="spacingAndGlyphs">EURAUD</text><text class="tb" x="414.3" y="48.5" textLength="42" lengthAdjust="spacingAndGlyphs">EURGBP</text><text class="tb" x="465.3" y="48.5" textLength="42" lengthAdjust="spacingAndGlyphs">GBPUSD</text><text class="tb" x="516.3" y="48.5" textLength="42" lengthAdjust="spacingAndGlyphs">GBPJPY</text><text class="tb" x="567.3" y="48.5" textLength="42" lengthAdjust="spacingAndGlyphs">GBPCAD</text><text class="tb" x="618.3" y="48.5" textLength="42" lengthAdjust="spacingAndGlyphs">GBPCHF</text><text class="tb" x="669.3" y="48.5" textLength="42" lengthAdjust="spacingAndGlyphs">GBPNZD</text><text class="tb" x="720.3" y="48.5" textLength="42" lengthAdjust="spacingAndGlyphs">GBPAUD</text><text class="tb" x="771.3" y="48.5" textLength="42" lengthAdjust="spacingAndGlyphs">AUDUSD</text><text class="tb" x="822.3" y="48.5" textLength="42" lengthAdjust="spacingAndGlyphs">AUDJPY</text><text class="tb" x="873.3" y="48.5" textLength="42" lengthAdjust="spacingAndGlyphs">AUDCAD</text>
<rect x="905" y="30" width="45" height="26" fill="#000"/><path d="M905.5 30V60" stroke="#e4e4e4"/>
<text x="19" y="42.5" style="fill:#fff" textLength="67" lengthAdjust="spacingAndGlyphs">GBPJPY_3S,M1</text>
<rect x="35.5" y="51" width="69.5" height="25" rx="1" fill="#fddfc3" stroke="#fff"/>
<text x="57" y="69" style="font-size:13px;fill:#777;font-weight:bold" textLength="22" lengthAdjust="spacingAndGlyphs">OFF</text>
<rect x="36" y="45" width="58.5" height="18.5" fill="#666"/>
<path d="M94.5 45V63.5H36" stroke="#222" fill="none"/>
<text x="50" y="59.5" style="font-size:13.5px;fill:#c41a22" textLength="27" lengthAdjust="spacingAndGlyphs">S&amp;R</text>
<rect x="790" y="67" width="78" height="20" fill="#666"/>
<text x="802" y="82.5" style="font-size:13.5px;fill:#2fd02f" textLength="52" lengthAdjust="spacingAndGlyphs">EOTF-on</text>
<g class="mono">
<text class="mono" x="894" y="111" text-anchor="end" style="font-size:11.7px;fill:#c8674f">ATR 1.2</text>
<text class="mono" x="894" y="128" text-anchor="end" style="font-size:11.7px;fill:#c8674f">Spread 0.0</text>
<text class="mono" x="894" y="177.5" text-anchor="end" style="font-size:16.6px;font-weight:bold;fill:#36b236">0:01</text>
<text class="mono" x="894" y="210" text-anchor="end" style="font-size:13px;fill:#2a64c4">ADR</text>
<text class="mono" x="854" y="229" text-anchor="end" style="font-size:13px;fill:#a9a9a9">Today</text>
<text class="mono" x="894" y="229" text-anchor="end" style="font-size:13px;fill:#a9a9a9">0</text>
<text class="mono" x="854" y="248" text-anchor="end" style="font-size:13px;fill:#a9a9a9">%</text>
<text class="mono" x="894" y="248" text-anchor="end" style="font-size:13px;fill:#a9a9a9">0</text>
<text class="mono" x="854" y="267" text-anchor="end" style="font-size:13px;fill:#2a64c4">Y'Day</text>
<text class="mono" x="894" y="267" text-anchor="end" style="font-size:13px;fill:#2a64c4">0</text>
<text class="mono" x="854" y="286" text-anchor="end" style="font-size:13px;fill:#2a64c4">Week</text>
<text class="mono" x="894" y="286" text-anchor="end" style="font-size:13px;fill:#2a64c4">0</text>
<text class="mono" x="854" y="305" text-anchor="end" style="font-size:13px;fill:#2a64c4">Month</text>
<text class="mono" x="894" y="305" text-anchor="end" style="font-size:13px;fill:#2a64c4">0</text>
<text class="mono" x="663.3" y="558" style="font-size:11.7px;fill:#a9a9a9">9.0</text><text class="mono" x="693.3" y="558" style="font-size:11.7px;fill:#a9a9a9">9.0</text><text class="mono" x="723.3" y="558" style="font-size:11.7px;fill:#a9a9a9">9.0</text><text class="mono" x="753.3" y="558" style="font-size:11.7px;fill:#a9a9a9">9.0</text><text class="mono" x="783.3" y="558" style="font-size:11.7px;fill:#a9a9a9">9.0</text><text class="mono" x="813.3" y="558" style="font-size:11.7px;fill:#a9a9a9">9.0</text><text class="mono" x="843.3" y="558" style="font-size:11.7px;fill:#a9a9a9">9.0</text><text class="mono" x="873.3" y="558" style="font-size:11.7px;fill:#a9a9a9">9.0</text>
<text class="mono" x="663.3" y="577" style="font-size:11.7px;fill:#a9a9a9">CHF</text><text class="mono" x="693.3" y="577" style="font-size:11.7px;fill:#a9a9a9">NZD</text><text class="mono" x="723.3" y="577" style="font-size:11.7px;fill:#a9a9a9">CAD</text><text class="mono" x="753.3" y="577" style="font-size:11.7px;fill:#a9a9a9">AUD</text><text class="mono" x="783.3" y="577" style="font-size:11.7px;fill:#a9a9a9">GBP</text><text class="mono" x="813.3" y="577" style="font-size:11.7px;fill:#a9a9a9">EUR</text><text class="mono" x="843.3" y="577" style="font-size:11.7px;fill:#a9a9a9">USD</text><text class="mono" x="873.3" y="577" style="font-size:11.7px;fill:#a9a9a9">JPY</text>
</g>
<text x="656.5" y="562" style="font-family:'Liberation Sans','Noto Sans CJK SC',sans-serif;font-size:13px;fill:#fff" textLength="67" lengthAdjust="spacingAndGlyphs">嗜僻: 59味</text>
<text x="650.5" y="576" style="font-family:'Liberation Sans','Noto Sans CJK SC',sans-serif;font-size:10px;fill:#fff">21</text>
<text x="664" y="577" style="font-family:'Liberation Sans','Noto Sans CJK SC',sans-serif;font-size:11px;fill:#fff">帳</text>
<text x="783.5" y="577" style="font-size:15px;fill:#b4b4b4" textLength="120.5" lengthAdjust="spacingAndGlyphs">BBwidth: 3.90 pips</text>
<text x="19" y="595" textLength="196" lengthAdjust="spacingAndGlyphs">M1 WaddahAttarExplosion of SMMA (20,40,20)</text>
<rect x="824" y="618.3" width="79.5" height="21.5" fill="#fff"/>
<text x="839" y="633.5" style="font-size:14px;fill:#66e866" textLength="49" lengthAdjust="spacingAndGlyphs">WAE-off</text>
<text x="824.5" y="634" style="fill:#000" textLength="19" lengthAdjust="spacingAndGlyphs">okyo</text>
<text x="858" y="634" style="fill:#000" textLength="41" lengthAdjust="spacingAndGlyphs">00:26:41</text>
<text x="800.5" y="648.3" style="fill:#0b500b;font-size:11.5px" textLength="43" lengthAdjust="spacingAndGlyphs">* London</text>
<text x="857.7" y="648.3" style="fill:#0b500b;font-size:11.5px" textLength="41" lengthAdjust="spacingAndGlyphs">16:26:41</text>
<text x="788.3" y="662.3" style="fill:#0b500b;font-size:11.5px" textLength="56" lengthAdjust="spacingAndGlyphs">* New York</text>
<text x="857.7" y="662.3" style="fill:#0b500b;font-size:11.5px" textLength="41" lengthAdjust="spacingAndGlyphs">11:26:41</text>
<text x="19" y="685" textLength="150" lengthAdjust="spacingAndGlyphs">M1 Bandswidth(20,2) 0.0002 0.0002</text>
<text x="19" y="771" textLength="318" lengthAdjust="spacingAndGlyphs">M1 Cronex Taichi 162.0218 162.0218 162.0198 162.0253 162.0256 162.0180</text>
<path d="M905 64.5h3M905 112.5h3M905 160.5h3M905 193.5h3M905 241.5h3M905 289.5h3M905 338.5h3M905 386.5h3M905 434.5h3M905 467.5h3M905 515.5h3M905 563.5h3" stroke="#ddd" fill="none"/>
<text class="ax" x="910" y="68" textLength="33" lengthAdjust="spacingAndGlyphs">162.060</text>
<text class="ax" x="910" y="116" textLength="33" lengthAdjust="spacingAndGlyphs">162.045</text>
<text class="ax" x="910" y="164" textLength="33" lengthAdjust="spacingAndGlyphs">162.030</text>
<text class="ax" x="910" y="197" textLength="33" lengthAdjust="spacingAndGlyphs">162.020</text>
<rect x="906" y="213.3" width="40.7" height="10.7" fill="#fff"/>
<text x="910" y="222.5" style="fill:#000" textLength="33" lengthAdjust="spacingAndGlyphs">162.012</text>
<text class="ax" x="910" y="245" textLength="33" lengthAdjust="spacingAndGlyphs">162.005</text>
<text class="ax" x="910" y="293" textLength="33" lengthAdjust="spacingAndGlyphs">161.990</text>
<text class="ax" x="910" y="342" textLength="33" lengthAdjust="spacingAndGlyphs">161.975</text>
<text class="ax" x="910" y="390" textLength="33" lengthAdjust="spacingAndGlyphs">161.960</text>
<text class="ax" x="910" y="438" textLength="33" lengthAdjust="spacingAndGlyphs">161.945</text>
<text class="ax" x="910" y="471" textLength="33" lengthAdjust="spacingAndGlyphs">161.935</text>
<text class="ax" x="910" y="519" textLength="33" lengthAdjust="spacingAndGlyphs">161.920</text>
<text class="ax" x="910" y="567.5" textLength="33" lengthAdjust="spacingAndGlyphs">161.905</text>
<text class="ax" x="908" y="593" textLength="28" lengthAdjust="spacingAndGlyphs">0.2808</text>
<text class="ax" x="912" y="668" textLength="28" lengthAdjust="spacingAndGlyphs">0.0131</text>
<text class="ax" x="908" y="670.5" textLength="18" lengthAdjust="spacingAndGlyphs">0.00</text>
<text class="ax" x="908" y="683" textLength="28" lengthAdjust="spacingAndGlyphs">0.0009</text>
<text class="ax" x="908" y="753" textLength="28" lengthAdjust="spacingAndGlyphs">0.0001</text>
<text class="ax" x="908" y="769" textLength="33" lengthAdjust="spacingAndGlyphs">162.033</text>
<text class="ax" x="908" y="839" textLength="38" lengthAdjust="spacingAndGlyphs">161.8704</text>
<path d="M15.5 842v3M79.5 842v3M143.5 842v3M207.5 842v3M271.5 842v3M335.5 842v3M399.5 842v3M463.5 842v3M527.5 842v3M591.5 842v3" stroke="#ddd" fill="none"/>
<text class="ax" x="14.7" y="855" textLength="49.5" lengthAdjust="spacingAndGlyphs">14 Jun 2022</text>
<text class="ax" x="78.3" y="855" textLength="53" lengthAdjust="spacingAndGlyphs">14 Jun 15:23</text>
<text class="ax" x="142.3" y="855" textLength="53" lengthAdjust="spacingAndGlyphs">14 Jun 15:23</text>
<text class="ax" x="206.3" y="855" textLength="53" lengthAdjust="spacingAndGlyphs">14 Jun 15:23</text>
<text class="ax" x="270.3" y="855" textLength="53" lengthAdjust="spacingAndGlyphs">14 Jun 15:24</text>
<text class="ax" x="334.3" y="855" textLength="53" lengthAdjust="spacingAndGlyphs">14 Jun 15:24</text>
<text class="ax" x="398.3" y="855" textLength="53" lengthAdjust="spacingAndGlyphs">14 Jun 15:25</text>
<text class="ax" x="462.3" y="855" textLength="53" lengthAdjust="spacingAndGlyphs">14 Jun 15:25</text>
<text class="ax" x="526.3" y="855" textLength="53" lengthAdjust="spacingAndGlyphs">14 Jun 15:25</text>
<text class="ax" x="590.3" y="855" textLength="53" lengthAdjust="spacingAndGlyphs">14 Jun 15:26</text>
<!-- title -->
<g fill="none" stroke="#4a8fc4"><rect x="13.5" y="8.5" width="9" height="7" fill="#dce9f5"/><rect x="16.5" y="11.5" width="10" height="9" fill="#eef5fb"/><path d="M18 18l2-3 2 3 2-3 1.5 2" stroke="#3a6fa0"/><path d="M14 10.5h8" stroke="#6aa8d8" stroke-width="2"/></g>
<text class="tt" x="32" y="19" textLength="132" lengthAdjust="spacingAndGlyphs">GBPJPY_3S,M1 (offline)</text>
<rect x="850.5" y="5.5" width="31" height="17" rx="2" fill="url(#btn)" stroke="#8d9aa7"/>
<rect x="884.5" y="5.5" width="31" height="17" rx="2" fill="url(#btn)" stroke="#8d9aa7"/>
<rect x="918.5" y="5.5" width="31" height="17" rx="2" fill="url(#btn)" stroke="#8d9aa7"/>
<rect x="860.5" y="13.5" width="10" height="3.5" fill="#eef3f8" stroke="#56606a"/>
<rect x="894.5" y="9.5" width="10" height="7.5" fill="none" stroke="#4e5862"/><rect x="897.5" y="11.5" width="4" height="3" fill="#4e5862"/>
<path d="M929 9.5l9.5 8M938.5 9.5l-9.5 8" stroke="#56606a" stroke-width="3" fill="none"/>
<path d="M929 9.5l9.5 8M938.5 9.5l-9.5 8" stroke="#eef3f8" stroke-width="1.2" fill="none"/>
</g>

<!-- WINDOW 2 overlay -->
<g transform="translate(958,0)">
<rect x="14" y="30" width="1.2" height="812" fill="#ddd"/>
<path d="M15 155.5H905" stroke="#7a7a7a" fill="none"/>
<path d="M15 564.5H905M15 580.5H905M15 582.5H905M15 669.5H905M15 672.5H905M15 756.5H905M15 758.5H905M15 842.5H905M905.5 30V842" stroke="#e4e4e4" fill="none"/>
<rect x="768.5" y="81.5" width="126" height="14" fill="none" stroke="#888"/>
<text x="738" y="71.5" style="font-family:'DejaVu Sans Mono',monospace;font-size:21.4px;font-weight:bold;fill:#f4a460" textLength="155" lengthAdjust="spacingAndGlyphs">M1 GBPJPY 6S</text>
<rect x="105" y="30.5" width="800" height="25.3" fill="#fff"/>
<rect x="718" y="32" width="49" height="23.5" fill="#eeeeee"/>
<path d="M155.7 31V56M206.7 31V56M257.7 31V56M308.7 31V56M359.7 31V56M410.7 31V56M461.7 31V56M512.7 31V56M563.7 31V56M614.7 31V56M665.7 31V56M716.7 31V56M767.7 31V56M818.7 31V56M869.7 31V56" stroke="#222" fill="none"/>
<path d="M154 31h3M205 31h3M256 31h3M307 31h3M358 31h3M409 31h3M460 31h3M511 31h3M562 31h3M613 31h3M664 31h3M715 31h3M766 31h3M817 31h3M868 31h3" stroke="#000" stroke-width="1.5" fill="none"/>
<path d="M649 31.5h9.5l-4.7 4.7z" fill="#777"/>
<text class="tb" x="108.3" y="48.5" textLength="42" lengthAdjust="spacingAndGlyphs">EURUSD</text><text class="tb" x="159.3" y="48.5" textLength="42" lengthAdjust="spacingAndGlyphs">EURJPY</text><text class="tb" x="210.3" y="48.5" textLength="42" lengthAdjust="spacingAndGlyphs">EURCAD</text><text class="tb" x="261.3" y="48.5" textLength="42" lengthAdjust="spacingAndGlyphs">EURCHF</text><text class="tb" x="312.3" y="48.5" textLength="42" lengthAdjust="spacingAndGlyphs">EURNZD</text><text class="tb" x="363.3" y="48.5" textLength="42" lengthAdjust="spacingAndGlyphs">EURAUD</text><text class="tb" x="414.3" y="48.5" textLength="42" lengthAdjust="spacingAndGlyphs">EURGBP</text><text class="tb" x="465.3" y="48.5" textLength="42" lengthAdjust="spacingAndGlyphs">GBPUSD</text><text class="tb" x="516.3" y="48.5" textLength="42" lengthAdjust="spacingAndGlyphs">GBPJPY</text><text class="tb" x="567.3" y="48.5" textLength="42" lengthAdjust="spacingAndGlyphs">GBPCAD</text><text class="tb" x="618.3" y="48.5" textLength="42" lengthAdjust="spacingAndGlyphs">GBPCHF</text><text class="tb" x="669.3" y="48.5" textLength="42" lengthAdjust="spacingAndGlyphs">GBPNZD</text><text class="tb" x="720.3" y="48.5" textLength="42" lengthAdjust="spacingAndGlyphs">GBPAUD</text><text class="tb" x="771.3" y="48.5" textLength="42" lengthAdjust="spacingAndGlyphs">AUDUSD</text><text class="tb" x="822.3" y="48.5" textLength="42" lengthAdjust="spacingAndGlyphs">AUDJPY</text><text class="tb" x="873.3" y="48.5" textLength="42" lengthAdjust="spacingAndGlyphs">AUDCAD</text>
<rect x="905" y="30" width="45" height="26" fill="#000"/><path d="M905.5 30V60" stroke="#e4e4e4"/>
<text x="19" y="42.5" style="fill:#fff" textLength="67" lengthAdjust="spacingAndGlyphs">GBPJPY_6S,M1</text>
<rect x="35.5" y="51" width="69.5" height="25" rx="1" fill="#fddfc3" stroke="#fff"/>
<text x="57" y="69" style="font-size:13px;fill:#777;font-weight:bold" textLength="22" lengthAdjust="spacingAndGlyphs">OFF</text>
<rect x="36" y="45" width="58.5" height="18.5" fill="#666"/>
<path d="M94.5 45V63.5H36" stroke="#222" fill="none"/>
<text x="50" y="59.5" style="font-size:13.5px;fill:#c41a22" textLength="27" lengthAdjust="spacingAndGlyphs">S&amp;R</text>
<rect x="790" y="67" width="78" height="20" fill="#666"/>
<text x="802" y="82.5" style="font-size:13.5px;fill:#2fd02f" textLength="52" lengthAdjust="spacingAndGlyphs">EOTF-on</text>
<text class="mono" x="894" y="111" text-anchor="end" style="font-size:11.7px;fill:#c8674f">ATR 1.2</text>
<text class="mono" x="894" y="128" text-anchor="end" style="font-size:11.7px;fill:#c8674f">Spread 0.0</text>
<text class="mono" x="894" y="177.5" text-anchor="end" style="font-size:16.6px;font-weight:bold;fill:#36b236">0:01</text>
<text class="mono" x="894" y="210" text-anchor="end" style="font-size:13px;fill:#2a64c4">ADR</text>
<text class="mono" x="854" y="229" text-anchor="end" style="font-size:13px;fill:#a9a9a9">Today</text>
<text class="mono" x="894" y="229" text-anchor="end" style="font-size:13px;fill:#a9a9a9">0</text>
<text class="mono" x="854" y="248" text-anchor="end" style="font-size:13px;fill:#a9a9a9">%</text>
<text class="mono" x="894" y="248" text-anchor="end" style="font-size:13px;fill:#a9a9a9">0</text>
<text class="mono" x="854" y="267" text-anchor="end" style="font-size:13px;fill:#2a64c4">Y'Day</text>
<text class="mono" x="894" y="267" text-anchor="end" style="font-size:13px;fill:#2a64c4">0</text>
<text class="mono" x="854" y="286" text-anchor="end" style="font-size:13px;fill:#2a64c4">Week</text>
<text class="mono" x="894" y="286" text-anchor="end" style="font-size:13px;fill:#2a64c4">0</text>
<text class="mono" x="854" y="305" text-anchor="end" style="font-size:13px;fill:#2a64c4">Month</text>
<text class="mono" x="894" y="305" text-anchor="end" style="font-size:13px;fill:#2a64c4">0</text>
<text class="mono" x="663.3" y="558" style="font-size:11.7px;fill:#a9a9a9">9.0</text><text class="mono" x="693.3" y="558" style="font-size:11.7px;fill:#a9a9a9">9.0</text><text class="mono" x="723.3" y="558" style="font-size:11.7px;fill:#a9a9a9">9.0</text><text class="mono" x="753.3" y="558" style="font-size:11.7px;fill:#a9a9a9">9.0</text><text class="mono" x="783.3" y="558" style="font-size:11.7px;fill:#a9a9a9">9.0</text><text class="mono" x="813.3" y="558" style="font-size:11.7px;fill:#a9a9a9">9.0</text><text class="mono" x="843.3" y="558" style="font-size:11.7px;fill:#a9a9a9">9.0</text><text class="mono" x="873.3" y="558" style="font-size:11.7px;fill:#a9a9a9">9.0</text>
<text class="mono" x="663.3" y="577" style="font-size:11.7px;fill:#a9a9a9">CHF</text><text class="mono" x="693.3" y="577" style="font-size:11.7px;fill:#a9a9a9">NZD</text><text class="mono" x="723.3" y="577" style="font-size:11.7px;fill:#a9a9a9">CAD</text><text class="mono" x="753.3" y="577" style="font-size:11.7px;fill:#a9a9a9">AUD</text><text class="mono" x="783.3" y="577" style="font-size:11.7px;fill:#a9a9a9">GBP</text><text class="mono" x="813.3" y="577" style="font-size:11.7px;fill:#a9a9a9">EUR</text><text class="mono" x="843.3" y="577" style="font-size:11.7px;fill:#a9a9a9">USD</text><text class="mono" x="873.3" y="577" style="font-size:11.7px;fill:#a9a9a9">JPY</text>
<text x="656.5" y="562" style="font-family:'Liberation Sans','Noto Sans CJK SC',sans-serif;font-size:13px;fill:#fff" textLength="67" lengthAdjust="spacingAndGlyphs">嗜僻: 59味</text>
<text x="650.5" y="576" style="font-family:'Liberation Sans','Noto Sans CJK SC',sans-serif;font-size:10px;fill:#fff">21</text>
<text x="664" y="577" style="font-family:'Liberation Sans','Noto Sans CJK SC',sans-serif;font-size:11px;fill:#fff">帳</text>
<text x="783.5" y="577" style="font-size:15px;fill:#b4b4b4" textLength="120.5" lengthAdjust="spacingAndGlyphs">BBwidth: 5.51 pips</text>
<text x="19" y="595" textLength="196" lengthAdjust="spacingAndGlyphs">M1 WaddahAttarExplosion of SMMA (20,40,20)</text>
<rect x="824" y="618.3" width="79.5" height="21.5" fill="#fff"/>
<text x="839" y="633.5" style="font-size:14px;fill:#66e866" textLength="49" lengthAdjust="spacingAndGlyphs">WAE-off</text>
<text x="824.5" y="634" style="fill:#000" textLength="19" lengthAdjust="spacingAndGlyphs">okyo</text>
<text x="858" y="634" style="fill:#000" textLength="41" lengthAdjust="spacingAndGlyphs">00:26:36</text>
<text x="800.5" y="648.3" style="fill:#0b500b;font-size:11.5px" textLength="43" lengthAdjust="spacingAndGlyphs">* London</text>
<text x="857.7" y="648.3" style="fill:#0b500b;font-size:11.5px" textLength="41" lengthAdjust="spacingAndGlyphs">16:26:36</text>
<text x="788.3" y="662.3" style="fill:#0b500b;font-size:11.5px" textLength="56" lengthAdjust="spacingAndGlyphs">* New York</text>
<text x="857.7" y="662.3" style="fill:#0b500b;font-size:11.5px" textLength="41" lengthAdjust="spacingAndGlyphs">11:26:36</text>
<text x="19" y="685" textLength="150" lengthAdjust="spacingAndGlyphs">M1 Bandswidth(20,2) 0.0003 0.0003</text>
<text x="19" y="771" textLength="236" lengthAdjust="spacingAndGlyphs">M1 Cronex Taichi 162.0085 162.0012 161.9840 162.0115</text>
<path d="M905 32.5h3M905 67.5h3M905 103.5h3M905 139.5h3M905 174.5h3M905 210.5h3M905 246.5h3M905 282.5h3M905 317.5h3M905 353.5h3M905 389.5h3M905 425.5h3M905 460.5h3M905 496.5h3M905 532.5h3M905 568.5h3" stroke="#ddd" fill="none"/>
<text class="ax" x="910" y="36" textLength="33" lengthAdjust="spacingAndGlyphs">162.070</text>
<text class="ax" x="910" y="71" textLength="33" lengthAdjust="spacingAndGlyphs">162.055</text>
<text class="ax" x="910" y="107" textLength="33" lengthAdjust="spacingAndGlyphs">162.040</text>
<text class="ax" x="910" y="143" textLength="33" lengthAdjust="spacingAndGlyphs">162.025</text>
<rect x="906" y="150" width="40.7" height="10.7" fill="#fff"/>
<text x="910" y="159.3" style="fill:#000" textLength="33" lengthAdjust="spacingAndGlyphs">162.018</text>
<text class="ax" x="910" y="178" textLength="33" lengthAdjust="spacingAndGlyphs">162.010</text>
<text class="ax" x="910" y="214" textLength="33" lengthAdjust="spacingAndGlyphs">161.995</text>
<text class="ax" x="910" y="250" textLength="33" lengthAdjust="spacingAndGlyphs">161.980</text>
<text class="ax" x="910" y="286" textLength="33" lengthAdjust="spacingAndGlyphs">161.965</text>
<text class="ax" x="910" y="321" textLength="33" lengthAdjust="spacingAndGlyphs">161.950</text>
<text class="ax" x="910" y="357" textLength="33" lengthAdjust="spacingAndGlyphs">161.935</text>
<text class="ax" x="910" y="393" textLength="33" lengthAdjust="spacingAndGlyphs">161.920</text>
<text class="ax" x="910" y="429" textLength="33" lengthAdjust="spacingAndGlyphs">161.905</text>
<text class="ax" x="910" y="464" textLength="33" lengthAdjust="spacingAndGlyphs">161.890</text>
<text class="ax" x="910" y="500" textLength="33" lengthAdjust="spacingAndGlyphs">161.875</text>
<text class="ax" x="910" y="536" textLength="33" lengthAdjust="spacingAndGlyphs">161.860</text>
<text class="ax" x="910" y="572" textLength="33" lengthAdjust="spacingAndGlyphs">161.845</text>
<text class="ax" x="908" y="593" textLength="28" lengthAdjust="spacingAndGlyphs">0.4943</text>
<text class="ax" x="912" y="668" textLength="28" lengthAdjust="spacingAndGlyphs">0.0221</text>
<text class="ax" x="908" y="670.5" textLength="18" lengthAdjust="spacingAndGlyphs">0.00</text>
<text class="ax" x="908" y="683" textLength="28" lengthAdjust="spacingAndGlyphs">0.0012</text>
<text class="ax" x="908" y="753" textLength="28" lengthAdjust="spacingAndGlyphs">0.0003</text>
<text class="ax" x="908" y="769" textLength="38" lengthAdjust="spacingAndGlyphs">162.0166</text>
<text class="ax" x="908" y="839" textLength="33" lengthAdjust="spacingAndGlyphs">161.893</text>
<path d="M15.5 842v3M79.5 842v3M143.5 842v3M207.5 842v3M271.5 842v3M335.5 842v3M399.5 842v3M463.5 842v3M527.5 842v3M591.5 842v3" stroke="#ddd" fill="none"/>
<text class="ax" x="14.7" y="855" textLength="49.5" lengthAdjust="spacingAndGlyphs">14 Jun 2022</text>
<text class="ax" x="78.3" y="855" textLength="53" lengthAdjust="spacingAndGlyphs">14 Jun 15:19</text>
<text class="ax" x="142.3" y="855" textLength="53" lengthAdjust="spacingAndGlyphs">14 Jun 15:20</text>
<text class="ax" x="206.3" y="855" textLength="53" lengthAdjust="spacingAndGlyphs">14 Jun 15:21</text>
<text class="ax" x="270.3" y="855" textLength="53" lengthAdjust="spacingAndGlyphs">14 Jun 15:22</text>
<text class="ax" x="334.3" y="855" textLength="53" lengthAdjust="spacingAndGlyphs">14 Jun 15:22</text>
<text class="ax" x="398.3" y="855" textLength="53" lengthAdjust="spacingAndGlyphs">14 Jun 15:23</text>
<text class="ax" x="462.3" y="855" textLength="53" lengthAdjust="spacingAndGlyphs">14 Jun 15:24</text>
<text class="ax" x="526.3" y="855" textLength="53" lengthAdjust="spacingAndGlyphs">14 Jun 15:25</text>
<text class="ax" x="590.3" y="855" textLength="53" lengthAdjust="spacingAndGlyphs">14 Jun 15:26</text>
<g fill="none" stroke="#4a8fc4"><rect x="13.5" y="8.5" width="9" height="7" fill="#dce9f5"/><rect x="16.5" y="11.5" width="10" height="9" fill="#eef5fb"/><path d="M18 18l2-3 2 3 2-3 1.5 2" stroke="#3a6fa0"/><path d="M14 10.5h8" stroke="#6aa8d8" stroke-width="2"/></g>
<text class="tt" x="32" y="19" textLength="132" lengthAdjust="spacingAndGlyphs">GBPJPY_6S,M1 (offline)</text>
<rect x="850.5" y="5.5" width="31" height="17" rx="2" fill="url(#btn)" stroke="#8d9aa7"/>
<rect x="884.5" y="5.5" width="31" height="17" rx="2" fill="url(#btn)" stroke="#8d9aa7"/>
<rect x="918.5" y="5.5" width="31" height="17" rx="2" fill="url(#btn)" stroke="#8d9aa7"/>
<rect x="860.5" y="13.5" width="10" height="3.5" fill="#eef3f8" stroke="#56606a"/>
<rect x="894.5" y="9.5" width="10" height="7.5" fill="none" stroke="#4e5862"/><rect x="897.5" y="11.5" width="4" height="3" fill="#4e5862"/>
<path d="M929 9.5l9.5 8M938.5 9.5l-9.5 8" stroke="#56606a" stroke-width="3" fill="none"/>
<path d="M929 9.5l9.5 8M938.5 9.5l-9.5 8" stroke="#eef3f8" stroke-width="1.2" fill="none"/>
</g>
</svg>
</body></html>
